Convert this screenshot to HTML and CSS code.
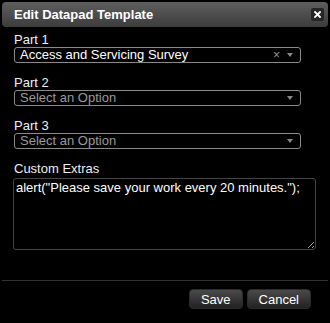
FILE: index.html
```html
<!DOCTYPE html>
<html lang="en">
<head>
    <meta charset="UTF-8">
    <meta name="viewport" content="width=device-width, initial-scale=1.0">
    <title>Edit Datapad Template</title>
    <link rel="stylesheet" href="styles.css">
</head>
<body>
    <div class="dialog">
        <div class="titlebar">
            <span class="title">Edit Datapad Template</span>
            <button class="close-btn" title="Close">
                <svg width="7" height="7" viewBox="0 0 7 7">
                    <path d="M1 1 L6 6 M6 1 L1 6" stroke="#fff" stroke-width="1.8" stroke-linecap="square"/>
                </svg>
            </button>
        </div>

        <div class="content">
            <div class="field">
                <div class="label">Part 1</div>
                <div class="select">
                    <span class="select-value">Access and Servicing Survey</span>
                    <span class="select-clear">&times;</span>
                    <span class="select-arrow"></span>
                </div>
            </div>
            <div class="field">
                <div class="label">Part 2</div>
                <div class="select">
                    <span class="select-value placeholder">Select an Option</span>
                    <span class="select-arrow"></span>
                </div>
            </div>
            <div class="field">
                <div class="label">Part 3</div>
                <div class="select">
                    <span class="select-value placeholder">Select an Option</span>
                    <span class="select-arrow"></span>
                </div>
            </div>
            <div class="field">
                <div class="label">Custom Extras</div>
                <textarea class="extras">alert("Please save your work every 20 minutes.");</textarea>
            </div>
        </div>

        <div class="footer">
            <button class="btn">Save</button>
            <button class="btn">Cancel</button>
        </div>
    </div>
</body>
</html>
```

FILE: styles.css
```css
html, body {
    margin: 0;
    background: #000;
}

body {
    font-family: "Liberation Sans", Arial, sans-serif;
    font-size: 13px;
    color: #eee;
}

.dialog {
    width: 330px;
    height: 323px;
    padding: 2px;
    box-sizing: border-box;
    display: flex;
    flex-direction: column;
    background: #000;
}

.titlebar {
    height: 25px;
    display: flex;
    align-items: center;
    justify-content: space-between;
    padding: 0 4px 0 12px;
    border-radius: 4px;
    background: linear-gradient(#5e5e5e, #3c3c3c);
}

.title {
    font-weight: bold;
    color: #fff;
}

.close-btn {
    width: 13px;
    height: 13px;
    padding: 0;
    border: none;
    border-radius: 2px;
    background: #262626;
    display: flex;
    align-items: center;
    justify-content: center;
}

.content {
    padding: 6px 12px 0 12px;
}

.field {
    margin-bottom: 13px;
}

.label {
    line-height: 14px;
    color: #f0f0f0;
}

.select {
    width: 287px;
    height: 16px;
    box-sizing: border-box;
    border: 1px solid #8a8a8a;
    border-radius: 3px;
    display: flex;
    align-items: center;
    padding: 0 5px 0 5px;
}

.select-value {
    flex: 1;
    color: #fff;
    line-height: 14px;
}

.select-value.placeholder {
    color: #9a9a9a;
}

.select-clear {
    color: #999;
    font-size: 12px;
    margin-right: 7px;
}

.select-arrow {
    width: 0;
    height: 0;
    border-left: 3px solid transparent;
    border-right: 3px solid transparent;
    border-top: 4px solid #888;
    margin-right: 2px;
}

.extras {
    display: block;
    width: 303px;
    height: 72px;
    margin: 2px 0 0 -1px;
    box-sizing: border-box;
    padding: 1px 2px;
    border: 1px solid #444;
    border-radius: 3px;
    background: #000;
    color: #fff;
    font-family: "Liberation Sans", Arial, sans-serif;
    font-size: 13px;
    line-height: 15px;
    resize: vertical;
}

.footer {
    margin-top: auto;
    border-top: 1px solid #333;
    padding: 8px 17px 12px 0;
    display: flex;
    justify-content: flex-end;
    gap: 4px;
}

.btn {
    height: 20px;
    padding: 0 11px;
    border: 1px solid #2c2c2c;
    border-radius: 4px;
    background: linear-gradient(#4a4a4a, #222);
    color: #fff;
    font-family: "Liberation Sans", Arial, sans-serif;
    font-size: 13px;
}
```
